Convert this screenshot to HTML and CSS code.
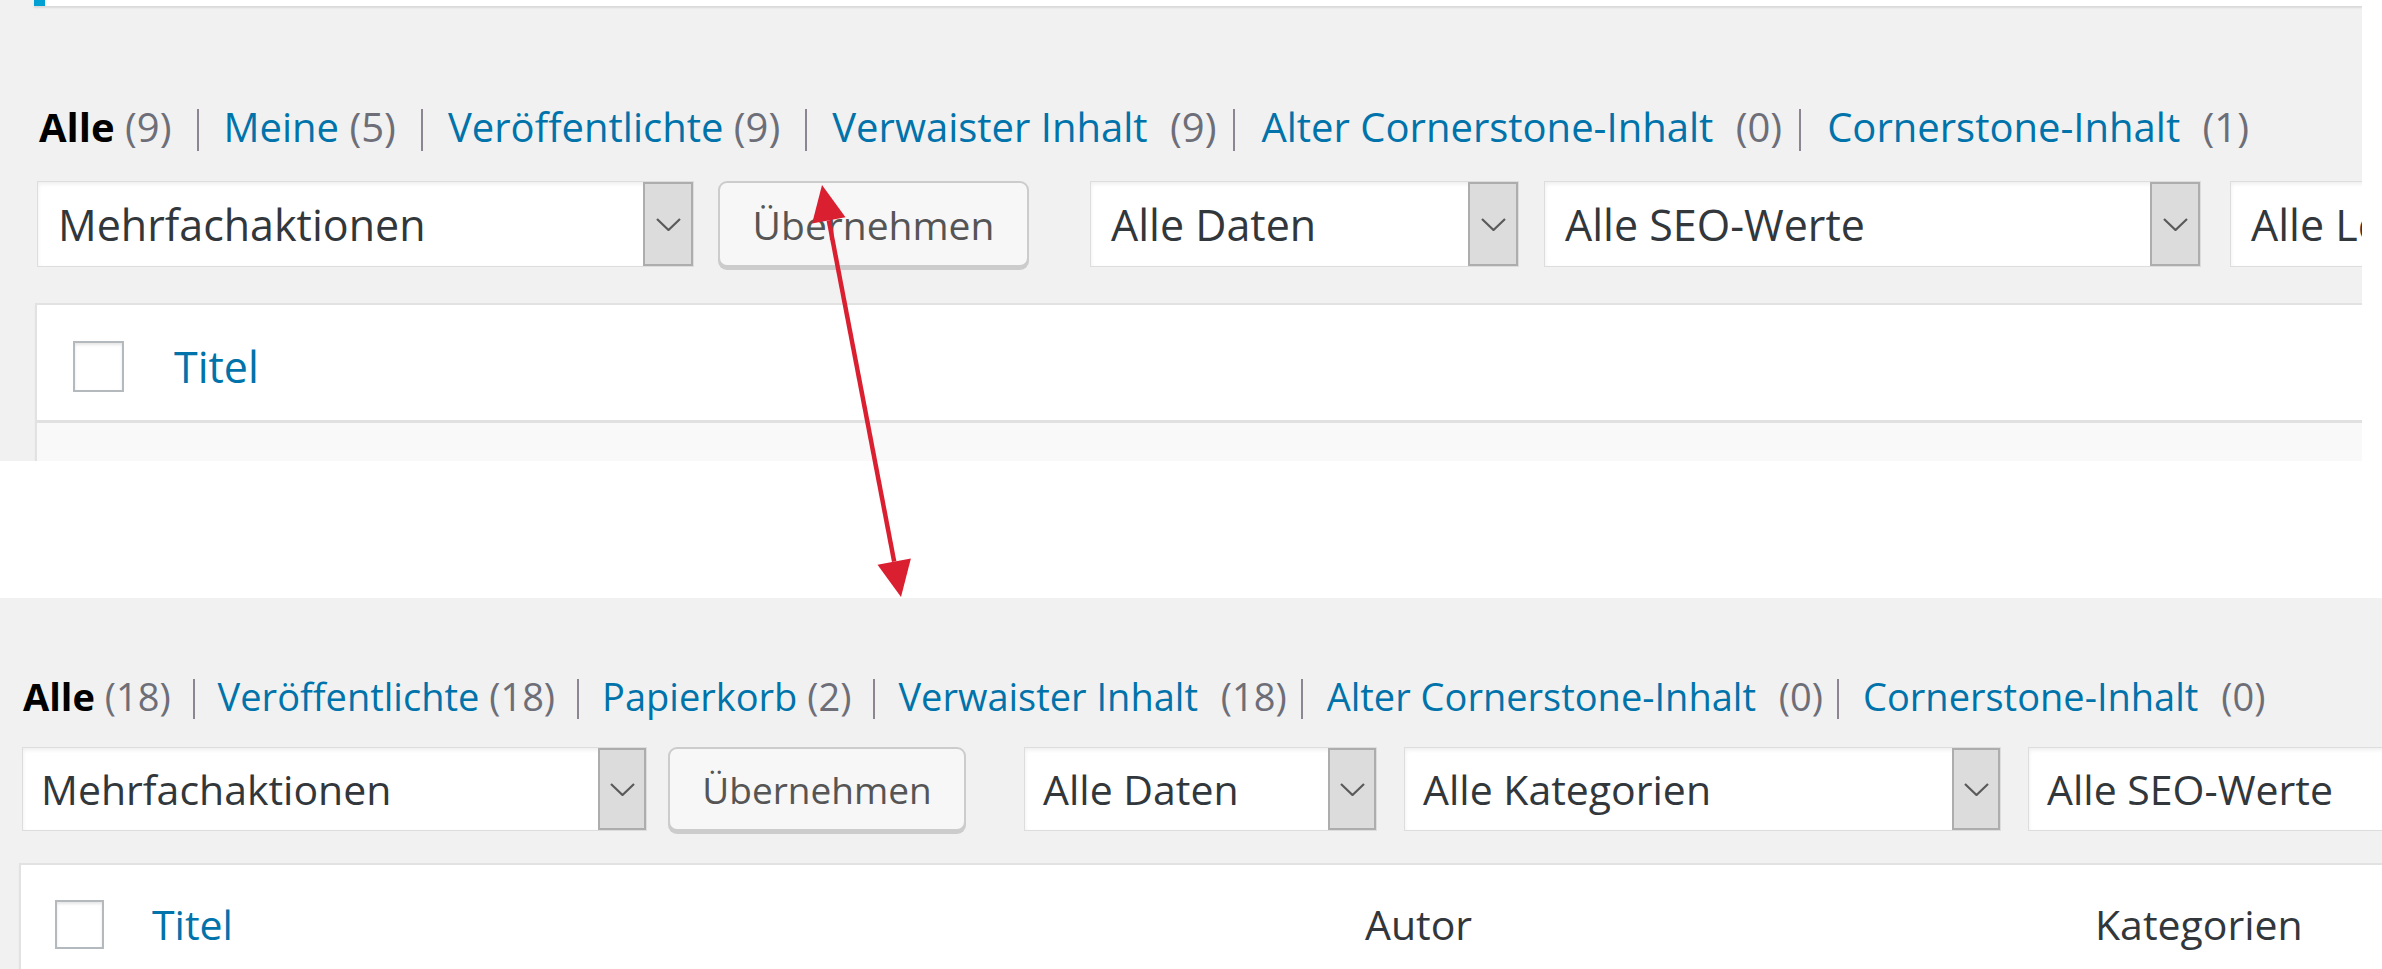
FILE: index.html
```html
<!DOCTYPE html>
<html lang="de">
<head>
    <meta charset="UTF-8">
    <meta name="viewport" content="width=device-width, initial-scale=1.0">
    <title>Beiträge</title>
    <link rel="stylesheet" href="styles.css">
</head>
<body>
    <!-- vorher: Liste mit Meine-Filter -->
    <div class="shot shot-old">
        <div class="notice"></div>

        <ul class="subsubsub">
            <li><a class="current" href="#">Alle <span class="count">(9)</span></a><i class="sep"></i></li>
            <li><a href="#">Meine <span class="count">(5)</span></a><i class="sep"></i></li>
            <li><a href="#">Veröffentlichte <span class="count">(9)</span></a><i class="sep"></i></li>
            <li><a href="#">Verwaister Inhalt</a> <span class="count wide">(9)</span><i class="sep tight"></i></li>
            <li><a href="#">Alter Cornerstone-Inhalt</a> <span class="count wide">(0)</span><i class="sep tight"></i></li>
            <li><a href="#">Cornerstone-Inhalt</a> <span class="count wide">(1)</span></li>
        </ul>

        <div class="tablenav">
            <div class="select bulk">Mehrfachaktionen<span class="caret"><svg viewBox="0 0 25 13"><polyline points="1,1 12.5,12 24,1"/></svg></span></div>
            <button class="button">Übernehmen</button>
            <div class="select dates">Alle Daten<span class="caret"><svg viewBox="0 0 25 13"><polyline points="1,1 12.5,12 24,1"/></svg></span></div>
            <div class="select seo">Alle SEO-Werte<span class="caret"><svg viewBox="0 0 25 13"><polyline points="1,1 12.5,12 24,1"/></svg></span></div>
            <div class="select read">Alle Lesbarkeitswerte<span class="caret"><svg viewBox="0 0 25 13"><polyline points="1,1 12.5,12 24,1"/></svg></span></div>
        </div>

        <div class="list">
            <div class="list-head">
                <div><span class="check"></span></div>
                <div><a href="#">Titel</a></div>
            </div>
            <div class="list-row"></div>
        </div>
    </div>

    <!-- nachher: Liste mit Papierkorb -->
    <div class="shot shot-new">
        <ul class="subsubsub">
            <li><a class="current" href="#">Alle <span class="count">(18)</span></a><i class="sep"></i></li>
            <li><a href="#">Veröffentlichte <span class="count">(18)</span></a><i class="sep"></i></li>
            <li><a href="#">Papierkorb <span class="count">(2)</span></a><i class="sep"></i></li>
            <li><a href="#">Verwaister Inhalt</a> <span class="count wide">(18)</span><i class="sep tight"></i></li>
            <li><a href="#">Alter Cornerstone-Inhalt</a> <span class="count wide">(0)</span><i class="sep tight"></i></li>
            <li><a href="#">Cornerstone-Inhalt</a> <span class="count wide">(0)</span></li>
        </ul>

        <div class="tablenav">
            <div class="select bulk">Mehrfachaktionen<span class="caret"><svg viewBox="0 0 25 13"><polyline points="1,1 12.5,12 24,1"/></svg></span></div>
            <button class="button">Übernehmen</button>
            <div class="select dates">Alle Daten<span class="caret"><svg viewBox="0 0 25 13"><polyline points="1,1 12.5,12 24,1"/></svg></span></div>
            <div class="select cats">Alle Kategorien<span class="caret"><svg viewBox="0 0 25 13"><polyline points="1,1 12.5,12 24,1"/></svg></span></div>
            <div class="select seo">Alle SEO-Werte<span class="caret"><svg viewBox="0 0 25 13"><polyline points="1,1 12.5,12 24,1"/></svg></span></div>
        </div>

        <div class="list">
            <div class="list-head">
                <div><span class="check"></span></div>
                <div><a href="#">Titel</a></div>
                <div>Autor</div>
                <div>Kategorien</div>
            </div>
        </div>
    </div>

    <!-- Doppelpfeil zwischen den beiden Ansichten -->
    <svg class="arrow" viewBox="0 0 2382 969" width="2382" height="969">
        <line x1="828.8" y1="220.4" x2="894.2" y2="561.6"/>
        <polygon points="822,185 845.5,217.2 812.1,223.6"/>
        <polygon points="901,597 910.9,558.4 877.5,564.8"/>
    </svg>
</body>
</html>
```

FILE: styles.css
```css
body {
    margin: 0;
    position: relative;
    width: 2382px;
    height: 969px;
    overflow: hidden;
    background-color: #fff;
    font-family: "Open Sans", "Noto Sans", sans-serif;
    color: #32373c;
}

a {
    color: #0073aa;
    text-decoration: none;
}

.shot {
    background-color: #f1f1f1;
    overflow: hidden;
    box-sizing: border-box;
}

.shot-old {
    width: 2362px;
    height: 461px;
    padding-left: 35px;
}

.shot-new {
    height: 371px;
    margin-top: 137px;
    padding-left: 19px;
}

.notice {
    height: 6px;
    margin-left: -1px;
    background-color: #fff;
    border-left: 11px solid #00a0d2;
    box-shadow: 0 2px 2px rgba(0, 0, 0, 0.1);
}

/* status links */
.subsubsub {
    list-style: none;
    display: flex;
    align-items: baseline;
    margin: 91px 0 0 4px;
    padding: 0;
    font-size: 40px;
    line-height: 60px;
    white-space: nowrap;
}

.subsubsub a.current {
    color: #000;
    font-weight: bold;
}

.subsubsub .count {
    color: #6d6e78;
    font-weight: normal;
}

.subsubsub .count.wide {
    margin-left: 12px;
}

.sep {
    display: inline-block;
    width: 2px;
    height: 42px;
    vertical-align: -9px;
    background-color: #8d8591;
    margin: 0 25px;
}

.sep.tight {
    margin: 0 26px 0 17px;
}

/* filter bar */
.tablenav {
    display: flex;
    margin: 24px 0 0 2px;
}

.tablenav > * {
    flex: none;
}

.select {
    display: flex;
    align-items: center;
    box-sizing: border-box;
    height: 86px;
    padding-left: 20px;
    background-color: #fff;
    border: 1px solid #ddd;
    box-shadow: inset 0 2px 4px rgba(0, 0, 0, 0.07);
    font-size: 43px;
    color: #32373c;
    white-space: nowrap;
    overflow: hidden;
}

.caret {
    margin-left: auto;
    align-self: stretch;
    flex: none;
    width: 50px;
    box-sizing: border-box;
    background-color: #dcdcdc;
    border: 2px solid #adadad;
    display: flex;
    align-items: center;
    justify-content: center;
}

.caret svg {
    width: 25px;
    height: 13px;
    fill: none;
    stroke: #5a5a5a;
    stroke-width: 2.2;
}

.button {
    box-sizing: border-box;
    height: 86px;
    padding: 0;
    background-color: #f7f7f7;
    border: 2px solid #ccc;
    border-radius: 9px;
    box-shadow: 0 3px 0 #ccc;
    color: #555;
    font-family: "Open Sans", "Noto Sans", sans-serif;
    font-size: 39px;
}

.shot-old .bulk { width: 657px; }
.shot-old .button { width: 311px; margin-left: 24px; }
.shot-old .dates { width: 429px; margin-left: 61px; }
.shot-old .seo { width: 657px; margin-left: 25px; }
.shot-old .read { width: 657px; margin-left: 29px; }

/* list table */
.list {
    margin: 36px -20px 0 0;
    background-color: #fff;
    border: 2px solid #e2e2e2;
    box-shadow: 0 2px 2px rgba(0, 0, 0, 0.04);
}

.list-head {
    display: grid;
    grid-template-columns: 137px 1fr;
    align-items: center;
    box-sizing: border-box;
    height: 118px;
    padding-top: 8px;
    border-bottom: 3px solid #e1e1e1;
    font-size: 43px;
    color: #32373c;
}

.list-head > div {
    display: flex;
    align-items: center;
}

.check {
    width: 51px;
    height: 51px;
    margin-left: 36px;
    box-sizing: border-box;
    background-color: #fff;
    border: 2px solid #b4b9be;
    box-shadow: inset 0 2px 3px rgba(0, 0, 0, 0.1);
}

.list-row {
    height: 60px;
    background-color: #f9f9f9;
}

/* second view, slightly smaller zoom */
.shot-new .subsubsub {
    margin: 70px 0 0 4px;
    font-size: 38px;
    line-height: 56px;
}

.shot-new .sep {
    height: 40px;
    vertical-align: -8px;
    margin: 0 23px 0 22px;
}

.shot-new .sep.tight {
    margin: 0 24px 0 14px;
}

.shot-new .count.wide {
    margin-left: 13px;
}

.shot-new .tablenav {
    margin: 23px 0 0 3px;
}

.shot-new .select {
    height: 84px;
    padding-left: 18px;
    font-size: 41px;
}

.shot-new .caret {
    width: 48px;
}

.shot-new .button {
    height: 84px;
    width: 298px;
    margin-left: 21px;
    font-size: 37px;
}

.shot-new .bulk { width: 625px; }
.shot-new .dates { width: 353px; margin-left: 58px; }
.shot-new .cats { width: 597px; margin-left: 27px; }
.shot-new .seo { width: 600px; margin-left: 27px; }

.shot-new .list {
    margin-top: 32px;
    border-right: none;
}

.shot-new .list-head {
    grid-template-columns: 131px 1213px 730px 1fr;
    height: 115px;
    padding-top: 6px;
    font-size: 41px;
}

.shot-new .check {
    width: 49px;
    height: 49px;
    margin-left: 34px;
}

.arrow {
    position: absolute;
    top: 0;
    left: 0;
    pointer-events: none;
}

.arrow line {
    stroke: #da1f30;
    stroke-width: 4.5;
}

.arrow polygon {
    fill: #da1f30;
}
```
